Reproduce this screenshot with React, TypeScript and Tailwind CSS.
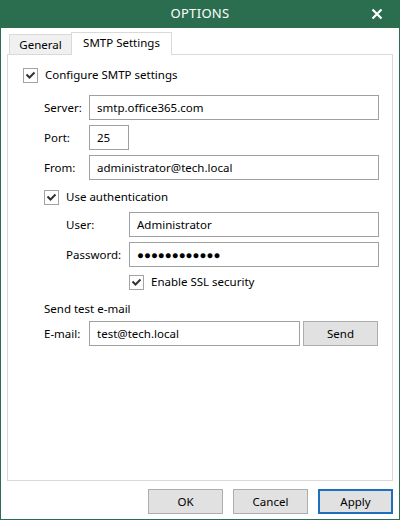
const font = { fontFamily: '"Noto Sans", "Open Sans", sans-serif' };

const Check = () => (
  <div className="w-[15px] h-[15px] border border-[#a3a3a3] bg-white flex items-center justify-center shrink-0">
    <svg width="11" height="11" viewBox="0 0 11 11">
      <path d="M1.5 4.5 L4.5 7.5 L9.5 2.5" fill="none" stroke="#333" strokeWidth="2" />
    </svg>
  </div>
);

const Field = ({ value, w }: { value: string; w: string }) => (
  <div className={`${w} h-[25px] border border-[#a0a0a0] bg-white flex items-center pl-[7px] text-[11.5px] text-black`}>
    {value}
  </div>
);

const Btn = ({ label, primary }: { label: string; primary?: boolean }) => (
  <div
    className={
      primary
        ? "w-[75px] h-[25px] bg-[#e1e1e1] border-2 border-[#1e6fbf] flex items-center justify-center text-[11.5px] text-black"
        : "w-[75px] h-[25px] bg-[#e1e1e1] border border-[#adadad] flex items-center justify-center text-[11.5px] text-black"
    }
  >
    {label}
  </div>
);

export default function App() {
  return (
    <div className="w-[400px] h-[520px] bg-[#2b6d4f] flex flex-col" style={font}>
      <div className="h-[28px] relative flex items-center justify-center text-white text-[13px] tracking-wide">
        OPTIONS
        <svg className="absolute left-[371px] top-[8px]" width="12" height="12" viewBox="0 0 12 12">
          <path d="M1.5 1.5 L10.5 10.5 M10.5 1.5 L1.5 10.5" stroke="#fff" strokeWidth="2.2" />
        </svg>
      </div>
      <div className="flex-1 mx-px mb-px bg-white flex flex-col pl-[6px] pr-[6px] pt-[4px]">
        <div className="flex items-end ml-[2px] h-[22px]">
          <div className="w-[63px] h-[20px] bg-[#f0f0f0] border border-b-0 border-[#d9d9d9] flex items-center justify-center text-[11.5px] text-black">
            General
          </div>
          <div className="-ml-px w-[101px] h-[23px] bg-white border border-b-0 border-[#d9d9d9] relative z-10 -mb-px flex items-center justify-center text-[11.5px] text-black pb-[2px]">
            SMTP Settings
          </div>
        </div>
        <div className="w-[386px] h-[427px] border border-[#d9d9d9] pl-[15px] text-[11.5px] text-black flex flex-col">
          <div className="flex items-center gap-[7px] mt-[8px] h-[24px]">
            <Check />
            <span>Configure SMTP settings</span>
          </div>
          <div className="flex items-center mt-[8px] pl-[21px]">
            <span className="w-[45px]">Server:</span>
            <Field value="smtp.office365.com" w="w-[290px]" />
          </div>
          <div className="flex items-center mt-[5px] pl-[21px]">
            <span className="w-[45px]">Port:</span>
            <Field value="25" w="w-[40px]" />
          </div>
          <div className="flex items-center mt-[5px] pl-[21px]">
            <span className="w-[45px]">From:</span>
            <Field value="administrator@tech.local" w="w-[290px]" />
          </div>
          <div className="flex items-center gap-[7px] mt-[5px] h-[24px] pl-[21px]">
            <Check />
            <span>Use authentication</span>
          </div>
          <div className="flex items-center mt-[3px] pl-[43px]">
            <span className="w-[63px]">User:</span>
            <Field value="Administrator" w="w-[250px]" />
          </div>
          <div className="flex items-center mt-[5px] pl-[43px]">
            <span className="w-[63px]">Password:</span>
            <Field value="●●●●●●●●●●●●" w="w-[250px]" />
          </div>
          <div className="flex items-center gap-[7px] mt-[3px] h-[24px] pl-[106px]">
            <Check />
            <span>Enable SSL security</span>
          </div>
          <div className="flex items-center mt-[6px] h-[18px] pl-[21px]">Send test e-mail</div>
          <div className="flex items-center mt-[3px] pl-[21px]">
            <span className="w-[45px]">E-mail:</span>
            <Field value="test@tech.local" w="w-[211px]" />
            <div className="ml-[3px]">
              <Btn label="Send" />
            </div>
          </div>
        </div>
        <div className="flex justify-end gap-[10px] mt-[8px]">
          <Btn label="OK" />
          <Btn label="Cancel" />
          <Btn label="Apply" primary />
        </div>
      </div>
    </div>
  );
}
